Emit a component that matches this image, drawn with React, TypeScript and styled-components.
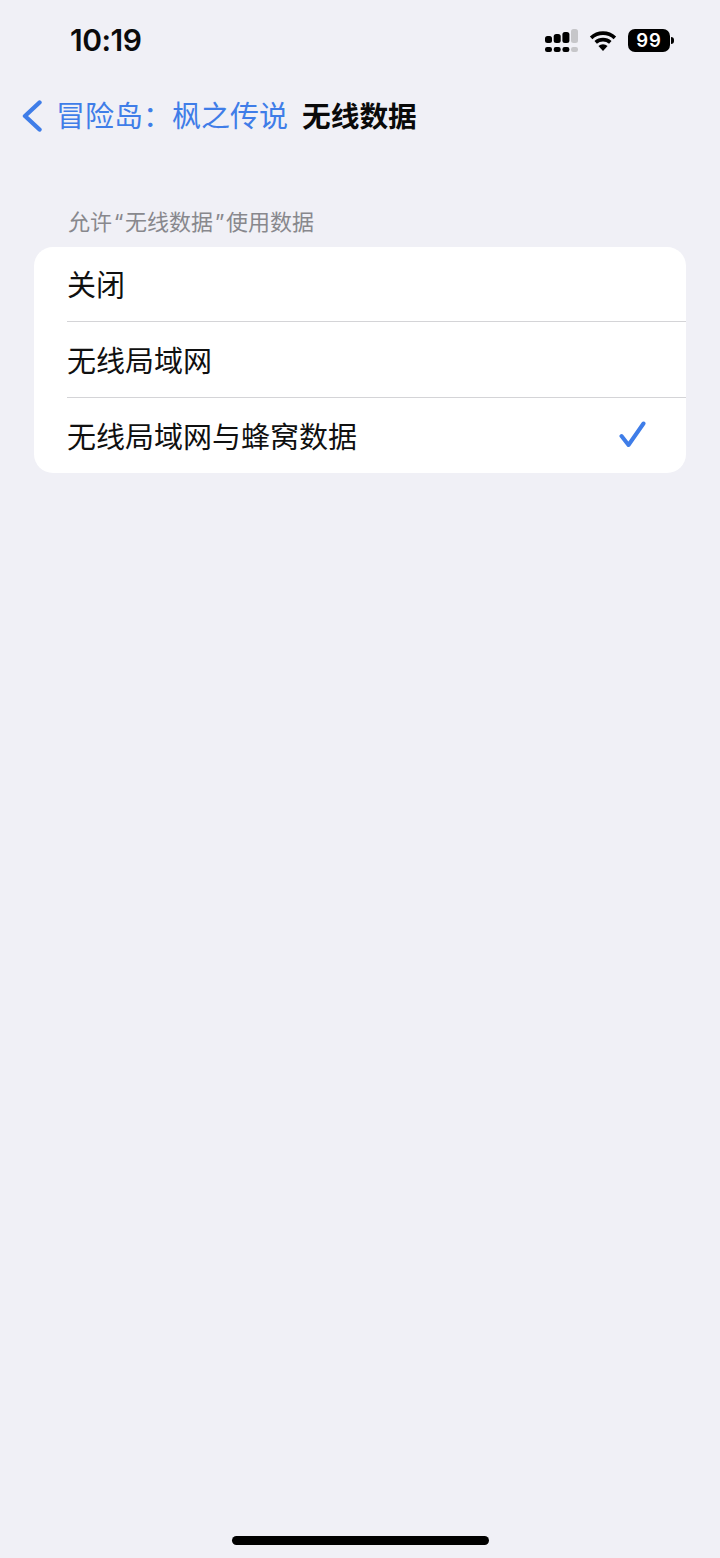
import React from "react";
import styled, { createGlobalStyle } from "styled-components";

const GlobalStyle = createGlobalStyle`
    html, body {
        margin: 0;
        padding: 0;
        background: #f0f0f6;
    }
    body {
        font-family: "Inter", "Noto Sans CJK SC", sans-serif;
    }
`;

const Page = styled.div`
    width: 720px;
    height: 1558px;
    display: flex;
    flex-direction: column;
    background: #f0f0f6;
    overflow: hidden;
`;

const StatusBar = styled.div`
    height: 80px;
    padding: 0 50px 0 70px;
    display: flex;
    align-items: center;
    justify-content: space-between;
    box-sizing: border-box;
`;

const Time = styled.div`
    font-family: "Inter", sans-serif;
    font-size: 30px;
    font-weight: 600;
    letter-spacing: -0.5px;
    color: #0b0b0c;
`;

const StatusIcons = styled.div`
    display: flex;
    align-items: center;
    gap: 11px;
`;

const Battery = styled.div`
    width: 42px;
    height: 23px;
    border-radius: 7px;
    background: #000;
    color: #fff;
    font-family: "Inter", sans-serif;
    font-size: 18.5px;
    font-weight: 600;
    line-height: 23px;
    text-align: center;
    letter-spacing: 0.8px;
    position: relative;
    &::after {
        content: "";
        position: absolute;
        right: -4px;
        top: 8px;
        width: 3px;
        height: 7px;
        border-radius: 0 3px 3px 0;
        background: #000;
    }
`;

const NavBar = styled.div`
    height: 72px;
    padding-left: 22px;
    display: flex;
    align-items: center;
    font-family: "Noto Sans CJK SC", sans-serif;
    font-size: 29px;
`;

const NavText = styled.div`
    display: flex;
    align-items: center;
    padding-bottom: 4px;
`;

const BackLabel = styled.span`
    color: #3f7de8;
    margin-left: 14px;
    white-space: nowrap;
`;

const NavTitle = styled.span`
    color: #0a0a0a;
    font-weight: 700;
    margin-left: 14px;
    font-size: 28.7px;
    white-space: nowrap;
`;

const SectionHeader = styled.div`
    margin: 52px 0 0 68px;
    height: 43px;
    font-family: "Noto Sans CJK SC", sans-serif;
    font-size: 22px;
    line-height: 32px;
    color: #88888d;
    white-space: nowrap;
`;

const Quote = styled.span`
    display: inline-block;
    width: 13px;
    font-family: "Inter", sans-serif;
    text-align: center;
`;

const Card = styled.div`
    margin: 0 34px;
    background: #fff;
    border-radius: 19px;
    overflow: hidden;
`;

const Row = styled.div`
    height: 75px;
    margin-left: 33px;
    padding: 0 39px 2px 0;
    display: flex;
    align-items: center;
    justify-content: space-between;
    box-sizing: border-box;
    border-bottom: 1px solid #d4d4d7;
    font-family: "Noto Sans CJK SC", sans-serif;
    font-size: 29px;
    color: #101010;
    &:nth-child(2) {
        height: 76px;
    }
    &:last-child {
        border-bottom: none;
    }
`;

const HomeIndicator = styled.div`
    width: 257px;
    height: 9px;
    margin: auto auto 13px;
    border-radius: 5px;
    background: #000;
`;

const Signal = () => (
    <svg width="33" height="23" viewBox="0 0 33 23">
        <g fill="#000">
            <rect x="0" y="7" width="7" height="7" rx="2.5" />
            <rect x="8.7" y="5" width="7" height="9" rx="2.5" />
            <rect x="17.4" y="3" width="7" height="11" rx="2.5" />
            <rect x="0" y="18" width="7" height="5" rx="2.2" />
            <rect x="8.7" y="18" width="7" height="5" rx="2.2" />
            <rect x="17.4" y="18" width="7" height="5" rx="2.2" />
        </g>
        <g fill="#c6c6c9">
            <rect x="26" y="0" width="7" height="14" rx="2.5" />
            <rect x="26" y="18" width="7" height="5" rx="2.2" />
        </g>
    </svg>
);

const Wifi = () => (
    <svg width="28" height="21" viewBox="0 0 30 23">
        <path d="M15 23 L10 17.4 A7.6 7.6 0 0 1 20 17.4 Z" fill="#000" />
        <path d="M2 8.6 A19 19 0 0 1 28 8.6" fill="none" stroke="#000" strokeWidth="4" />
        <path d="M7 13.6 A12 12 0 0 1 23 13.6" fill="none" stroke="#000" strokeWidth="4" />
    </svg>
);

const BackChevron = () => (
    <svg width="20" height="34" viewBox="0 0 20 34">
        <path d="M17.5 3.5 L3 17 L17.5 30.5" fill="none" stroke="#3f7de8" strokeWidth="4.4" strokeLinecap="round" strokeLinejoin="round" />
    </svg>
);

const Check = () => (
    <svg width="28" height="27" viewBox="0 0 28 27">
        <path d="M2.5 15 L9.5 24 L24.5 2.5" fill="none" stroke="#3f7de8" strokeWidth="4" strokeLinecap="round" strokeLinejoin="round" />
    </svg>
);

const App = () => {
    return (
        <Page>
            <GlobalStyle />
            <StatusBar>
                <Time>10:19</Time>
                <StatusIcons>
                    <Signal />
                    <Wifi />
                    <Battery>99</Battery>
                </StatusIcons>
            </StatusBar>
            <NavBar>
                <BackChevron />
                <NavText>
                    <BackLabel>冒险岛：枫之传说</BackLabel>
                    <NavTitle>无线数据</NavTitle>
                </NavText>
            </NavBar>
            <SectionHeader>
                允许<Quote>“</Quote>无线数据<Quote>”</Quote>使用数据
            </SectionHeader>
            <Card>
                <Row>关闭</Row>
                <Row>无线局域网</Row>
                <Row>
                    无线局域网与蜂窝数据
                    <Check />
                </Row>
            </Card>
            <HomeIndicator />
        </Page>
    );
};

export default App;
